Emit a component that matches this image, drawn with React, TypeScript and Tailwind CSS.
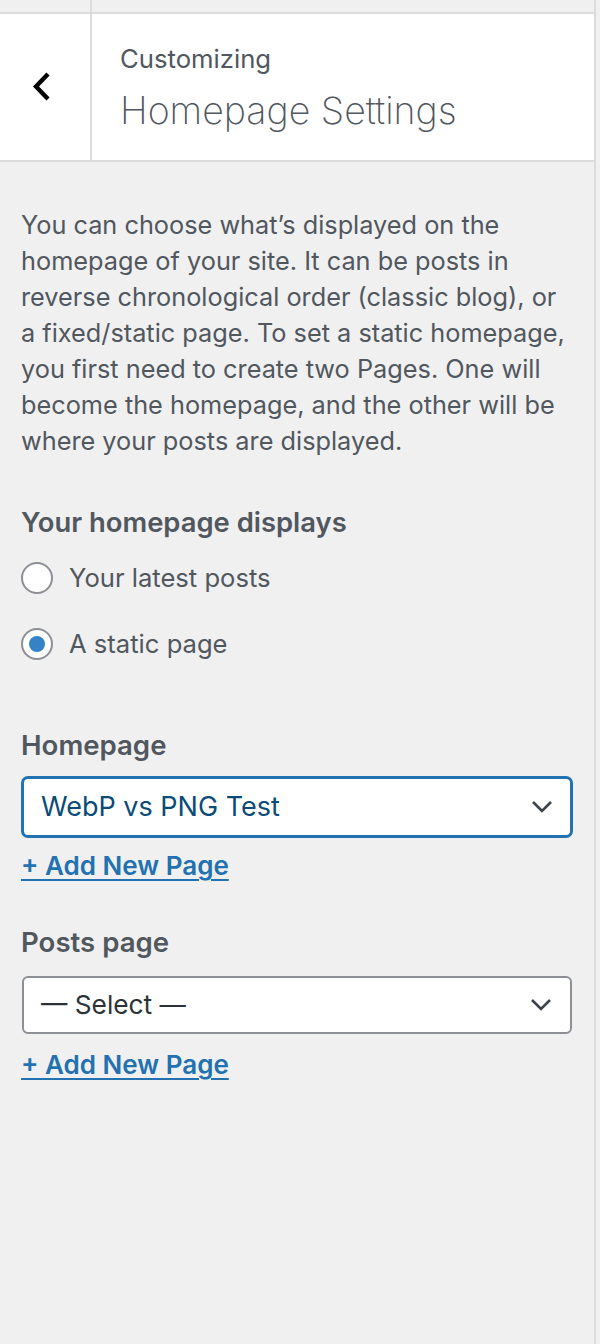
import React from "react";

const font = { fontFamily: "Inter, 'Noto Sans', sans-serif" };

function Chevron() {
  return (
    <svg width="24" height="32" viewBox="0 0 24 32" fill="none">
      <polyline points="19,3 7,15.5 19,28" stroke="#000" strokeWidth="4.4" strokeLinecap="butt" strokeLinejoin="miter" />
    </svg>
  );
}

function SelectChevron() {
  return (
    <svg width="22" height="14" viewBox="0 0 22 14" fill="none">
      <polyline points="2,2 11,11 20,2" stroke="#3c434a" strokeWidth="2.6" />
    </svg>
  );
}

function Radio({ checked }: { checked?: boolean }) {
  return (
    <div className="w-[32px] h-[32px] rounded-full border-2 border-[#8c8f94] bg-white flex items-center justify-center shrink-0">
      {checked && <div className="w-[16px] h-[16px] rounded-full bg-[#3582c4]" />}
    </div>
  );
}

export default function App() {
  return (
    <div className="w-[600px] h-[1344px] bg-[#f0f0f1] flex" style={font}>
      <div className="w-[596px] h-full border-r-2 border-[#dcdcde] flex flex-col">
        {/* top strip */}
        <div className="h-[14px] flex border-b-2 border-[#dcdcde]">
          <div className="w-[92px] border-r-2 border-[#dcdcde]" />
          <div className="flex-1" />
        </div>
        {/* header */}
        <div className="h-[148px] bg-white flex border-b-2 border-[#dcdcde]">
          <div className="w-[92px] border-r-2 border-[#dcdcde] flex items-center justify-center pr-[8px]">
            <Chevron />
          </div>
          <div className="flex-1 pl-[28px] pt-[28px]">
            <div className="text-[25.7px] leading-[34px] text-[#50575e] font-normal">Customizing</div>
            <div className="text-[37.5px] leading-[48px] text-[#50575e] font-extralight mt-[11px]">Homepage Settings</div>
          </div>
        </div>
        {/* body */}
        <div className="px-[21px] pt-[45px]">
          <p className="text-[25.3px] leading-[36px] text-[#50575e]">
            You can choose what’s displayed on the<br />
            homepage of your site. It can be posts in<br />
            reverse chronological order (classic blog), or<br />
            a fixed/static page. To set a static homepage,<br />
            you first need to create two Pages. One will<br />
            become the homepage, and the other will be<br />
            where your posts are displayed.
          </p>
          <div className="mt-[45px] text-[27.4px] leading-[36px] font-semibold text-[#50575e]">Your homepage displays</div>
          <div className="mt-[14px] flex items-center gap-[16px] h-[48px]">
            <Radio />
            <span className="text-[25.6px] text-[#50575e]">Your latest posts</span>
          </div>
          <div className="mt-[18px] flex items-center gap-[16px] h-[48px]">
            <Radio checked />
            <span className="text-[25.6px] text-[#50575e]">A static page</span>
          </div>
          <div className="mt-[59px] text-[27.6px] leading-[36px] font-semibold text-[#50575e]">Homepage</div>
          <div className="mt-[13px] h-[62px] w-[552px] rounded-[7px] border-[3px] border-[#2271b1] bg-white flex items-center justify-between pl-[17px] pr-[17px]">
            <span className="text-[27px] text-[#0a4b78]">WebP vs PNG Test</span>
            <SelectChevron />
          </div>
          <div className="mt-[10px] leading-[36px]">
            <a className="text-[26px] font-semibold text-[#2271b1] underline underline-offset-[4px] decoration-2">+ Add New Page</a>
          </div>
          <div className="mt-[37px] text-[27.6px] leading-[36px] font-semibold text-[#50575e]">Posts page</div>
          <div className="mt-[16px] ml-[1px] h-[58px] w-[550px] rounded-[6px] border-2 border-[#8c8f94] bg-white flex items-center justify-between pl-[17px] pr-[18px]">
            <span className="text-[26.3px] text-[#2c3338]">— Select —</span>
            <SelectChevron />
          </div>
          <div className="mt-[13px] leading-[36px]">
            <a className="text-[26px] font-semibold text-[#2271b1] underline underline-offset-[4px] decoration-2">+ Add New Page</a>
          </div>
        </div>
      </div>
      <div className="flex-1" />
    </div>
  );
}
